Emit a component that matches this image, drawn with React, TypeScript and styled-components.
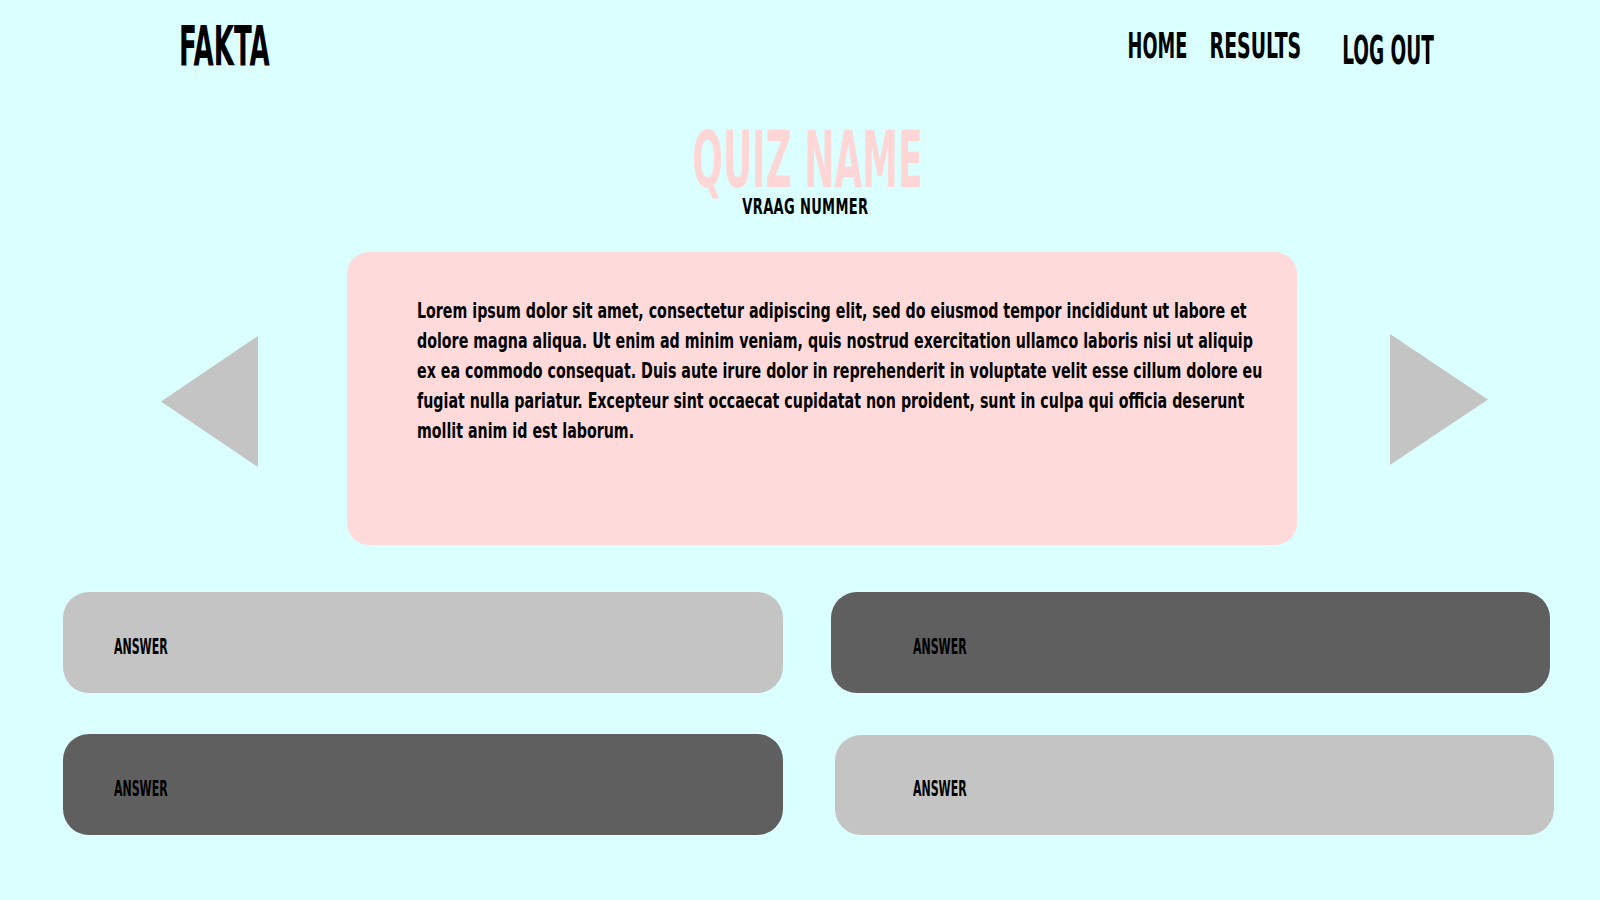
import React from "react";
import styled, { createGlobalStyle } from "styled-components";

const FONT = `"Liberation Sans Narrow", "DejaVu Sans Condensed", "Liberation Sans", sans-serif`;

const GlobalStyle = createGlobalStyle`
  html, body {
    margin: 0;
    padding: 0;
    background: #dafffe;
  }
  body {
    font-family: ${FONT};
    color: #000;
    overflow: hidden;
  }
  * { box-sizing: border-box; }
`;

const Page = styled.div`
  width: 1600px;
  height: 900px;
  background: #dafffe;
  display: flex;
  flex-direction: column;
`;

const Squeeze = styled.span<{ $x: number; $origin?: string }>`
  display: inline-block;
  white-space: nowrap;
  transform: scaleX(${(p) => p.$x});
  transform-origin: ${(p) => p.$origin ?? "center"};
`;

const Header = styled.header`
  height: 124px;
  display: flex;
  align-items: flex-start;
  justify-content: space-between;
  padding: 0 166px 0 179px;
`;

const Logo = styled.div`
  margin-top: 18px;
  font-size: 56px;
  line-height: 1;
  font-weight: 700;
`;

const Nav = styled.nav`
  display: flex;
  align-items: flex-start;
  gap: 23px;
`;

const NavLink = styled.a<{ $w: number; $size: number; $top: number; $gapLeft?: number }>`
  display: flex;
  justify-content: center;
  width: ${(p) => p.$w}px;
  margin-top: ${(p) => p.$top}px;
  margin-left: ${(p) => p.$gapLeft ?? 0}px;
  font-size: ${(p) => p.$size}px;
  line-height: 1;
  font-weight: 700;
  color: #000;
  text-decoration: none;
  cursor: pointer;
`;

const TitleBlock = styled.section`
  display: flex;
  flex-direction: column;
  align-items: center;
  padding-left: 14px;
`;

const QuizName = styled.h1`
  margin: 2px 0 0;
  font-size: 78px;
  line-height: 68px;
  height: 68px;
  font-weight: 700;
  color: #ffd6d6;
`;

const QuestionNumber = styled.h2`
  margin: 3px 0 0 -4px;
  font-size: 21px;
  line-height: 1;
  font-weight: 700;
  letter-spacing: 0.5px;
`;

const Stage = styled.section`
  margin-top: 34px;
  display: flex;
  align-items: center;
  padding-left: 161px;
`;

const Arrow = styled.button<{ $gap: number; $shift: number }>`
  display: block;
  padding: 0;
  border: none;
  background: none;
  margin-left: ${(p) => p.$gap}px;
  margin-top: ${(p) => p.$shift * 2}px;
  cursor: pointer;
  line-height: 0;
`;

const QuestionCard = styled.article`
  margin-left: 88px;
  width: 950px;
  height: 293px;
  background: #ffdada;
  border-radius: 22px;
  padding: 44px 0 0 70px;
  overflow: visible;
`;

const PARA_SCALE = 0.719;
const Paragraph = styled.p`
  margin: 0;
  width: ${852 / PARA_SCALE}px;
  font-size: 22px;
  line-height: 30px;
  font-weight: 700;
  transform: scaleX(${PARA_SCALE});
  transform-origin: left top;
`;

const Answers = styled.section`
  margin-top: 47px;
  padding-left: 63px;
  display: grid;
  grid-template-columns: 720px 719px;
  grid-auto-rows: 101px;
  column-gap: 48px;
  row-gap: 41px;
`;

const AnswerButton = styled.button<{ $dark?: boolean; $pad: number; $nudge?: number }>`
  display: flex;
  align-items: center;
  padding: 8px 0 0 ${(p) => p.$pad}px;
  border: none;
  border-radius: 26px;
  background: ${(p) => (p.$dark ? "#5f5f5f" : "#c4c4c4")};
  margin-left: ${(p) => p.$nudge ?? 0}px;
  margin-right: ${(p) => -(p.$nudge ?? 0)}px;
  margin-top: ${(p) => (p.$nudge ? 1 : 0)}px;
  font-family: ${FONT};
  font-size: 22px;
  line-height: 1;
  font-weight: 700;
  color: #000;
  cursor: pointer;
  text-align: left;
`;

const Triangle = ({ dir }: { dir: "left" | "right" }) => (
  <svg width="98" height="131" viewBox="0 0 98 131" aria-hidden>
    {dir === "left" ? (
      <polygon points="0,65.5 97,0 97,131" fill="#c4c4c4" />
    ) : (
      <polygon points="0,0 98,65.5 0,131" fill="#c4c4c4" />
    )}
  </svg>
);

export default function App() {
  return (
    <>
      <GlobalStyle />
      <Page>
        <Header>
          <Logo>
            <Squeeze $x={0.518} $origin="left center">FAKTA</Squeeze>
          </Logo>
          <Nav>
            <NavLink $w={59} $size={36} $top={28}>
              <Squeeze $x={0.549}>HOME</Squeeze>
            </NavLink>
            <NavLink $w={90} $size={36} $top={28}>
              <Squeeze $x={0.585}>RESULTS</Squeeze>
            </NavLink>
            <NavLink $w={91} $size={39} $top={31} $gapLeft={20}>
              <Squeeze $x={0.527}>LOG OUT</Squeeze>
            </NavLink>
          </Nav>
        </Header>

        <TitleBlock>
          <QuizName>
            <Squeeze $x={0.513}>QUIZ NAME</Squeeze>
          </QuizName>
          <QuestionNumber>
            <Squeeze $x={0.69}>VRAAG NUMMER</Squeeze>
          </QuestionNumber>
        </TitleBlock>

        <Stage>
          <Arrow $gap={0} $shift={3} aria-label="Previous question">
            <Triangle dir="left" />
          </Arrow>
          <QuestionCard>
            <Paragraph>
              Lorem ipsum dolor sit amet, consectetur adipiscing elit, sed do eiusmod tempor incididunt ut
              labore et dolore magna aliqua. Ut enim ad minim veniam, quis nostrud exercitation ullamco
              laboris nisi ut aliquip ex ea commodo consequat. Duis aute irure dolor in reprehenderit in
              voluptate velit esse cillum dolore eu fugiat nulla pariatur. Excepteur sint occaecat cupidatat
              non proident, sunt in culpa qui officia deserunt mollit anim id est laborum.
            </Paragraph>
          </QuestionCard>
          <Arrow $gap={93} $shift={1} aria-label="Next question">
            <Triangle dir="right" />
          </Arrow>
        </Stage>

        <Answers>
          <AnswerButton $pad={51}>
            <Squeeze $x={0.555} $origin="left center">ANSWER</Squeeze>
          </AnswerButton>
          <AnswerButton $dark $pad={82}>
            <Squeeze $x={0.555} $origin="left center">ANSWER</Squeeze>
          </AnswerButton>
          <AnswerButton $dark $pad={51}>
            <Squeeze $x={0.555} $origin="left center">ANSWER</Squeeze>
          </AnswerButton>
          <AnswerButton $pad={78} $nudge={4}>
            <Squeeze $x={0.555} $origin="left center">ANSWER</Squeeze>
          </AnswerButton>
        </Answers>
      </Page>
    </>
  );
}
